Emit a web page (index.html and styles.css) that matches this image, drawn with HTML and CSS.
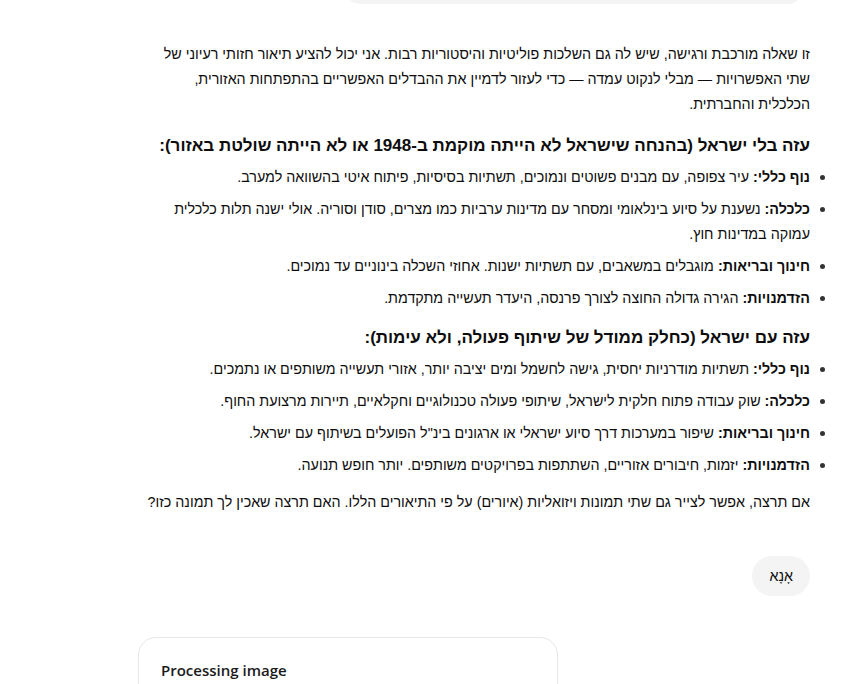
FILE: index.html
```html
<!DOCTYPE html>
<html lang="he" dir="rtl">
<head>
  <meta charset="UTF-8" />
  <meta name="viewport" content="width=device-width, initial-scale=1.0"/>
  <title>שיחה</title>
  <link rel="stylesheet" href="styles.css">
</head>
<body>
  <div class="thread">
    <div class="user-row top">
      <div class="bubble wide"></div>
    </div>

    <div class="answer">
      <p>זו שאלה מורכבת ורגישה, שיש לה גם השלכות פוליטיות והיסטוריות רבות. אני יכול להציע תיאור חזותי רעיוני של שתי האפשרויות — מבלי לנקוט עמדה — כדי לעזור לדמיין את ההבדלים האפשריים בהתפתחות האזורית, הכלכלית והחברתית.</p>

      <h3>עזה בלי ישראל (בהנחה שישראל לא הייתה מוקמת ב-1948 או לא הייתה שולטת באזור):</h3>
      <ul>
        <li><strong>נוף כללי:</strong> עיר צפופה, עם מבנים פשוטים ונמוכים, תשתיות בסיסיות, פיתוח איטי בהשוואה למערב.</li>
        <li><strong>כלכלה:</strong> נשענת על סיוע בינלאומי ומסחר עם מדינות ערביות כמו מצרים, סודן וסוריה. אולי ישנה תלות כלכלית עמוקה במדינות חוץ.</li>
        <li><strong>חינוך ובריאות:</strong> מוגבלים במשאבים, עם תשתיות ישנות. אחוזי השכלה בינוניים עד נמוכים.</li>
        <li><strong>הזדמנויות:</strong> הגירה גדולה החוצה לצורך פרנסה, היעדר תעשייה מתקדמת.</li>
      </ul>

      <h3>עזה עם ישראל (כחלק ממודל של שיתוף פעולה, ולא עימות):</h3>
      <ul>
        <li><strong>נוף כללי:</strong> תשתיות מודרניות יחסית, גישה לחשמל ומים יציבה יותר, אזורי תעשייה משותפים או נתמכים.</li>
        <li><strong>כלכלה:</strong> שוק עבודה פתוח חלקית לישראל, שיתופי פעולה טכנולוגיים וחקלאיים, תיירות מרצועת החוף.</li>
        <li><strong>חינוך ובריאות:</strong> שיפור במערכות דרך סיוע ישראלי או ארגונים בינ"ל הפועלים בשיתוף עם ישראל.</li>
        <li><strong>הזדמנויות:</strong> יזמות, חיבורים אזוריים, השתתפות בפרויקטים משותפים. יותר חופש תנועה.</li>
      </ul>

      <p>אם תרצה, אפשר לצייר גם שתי תמונות ויזואליות (איורים) על פי התיאורים הללו. האם תרצה שאכין לך תמונה כזו?</p>
    </div>

    <div class="user-row">
      <div class="bubble">אָנָא</div>
    </div>

    <div class="status-card">
      <div class="status-title" dir="ltr">Processing image</div>
    </div>
  </div>
</body>
</html>
```

FILE: styles.css
```css
:root {
  --text: #0d0d0d;
  --bubble: #f4f4f4;
  --border: #e6e6e6;
}
* { box-sizing: border-box; margin: 0; padding: 0; }
body {
  font-family: 'Liberation Sans', 'DejaVu Sans', sans-serif;
  background: #ffffff;
  color: var(--text);
  font-size: 14.3px;
  line-height: 25px;
  height: 684px;
  overflow: hidden;
}
.thread {
  width: 670px;
  margin-right: 35px;
  margin-left: auto;
  margin-top: -36px;
}
.user-row { display: flex; justify-content: flex-start; }
.bubble {
  background: var(--bubble);
  border-radius: 20px;
  padding: 8px 17px;
  line-height: 24px;
}
.bubble.wide {
  width: 462px;
  height: 40px;
  margin-right: 5px;
  border-radius: 18px;
}
.answer { margin-top: 38px; }
.answer p { margin-bottom: 15px; }
h3 {
  font-size: 17px;
  font-weight: 700;
  line-height: 28px;
  margin-bottom: 5px;
}
ul {
  list-style: none;
  margin-bottom: 12.5px;
}
li {
  position: relative;
  margin-bottom: 7px;
}
li::before {
  content: "";
  position: absolute;
  right: -15px;
  top: 10px;
  width: 5px;
  height: 5px;
  border-radius: 50%;
  background: #333333;
}
strong { font-weight: 700; }
.user-row:not(.top) { margin-top: 41px; }
.status-card {
  margin-top: 41px;
  width: 420px;
  margin-right: auto;
  margin-left: -2px;
  border: 1px solid var(--border);
  border-radius: 18px;
  padding: 20px 22px 40px;
}
.status-title {
  font-family: 'Open Sans', 'Liberation Sans', sans-serif;
  font-size: 15px;
  font-weight: 600;
  color: #1a1a1a;
}
```
